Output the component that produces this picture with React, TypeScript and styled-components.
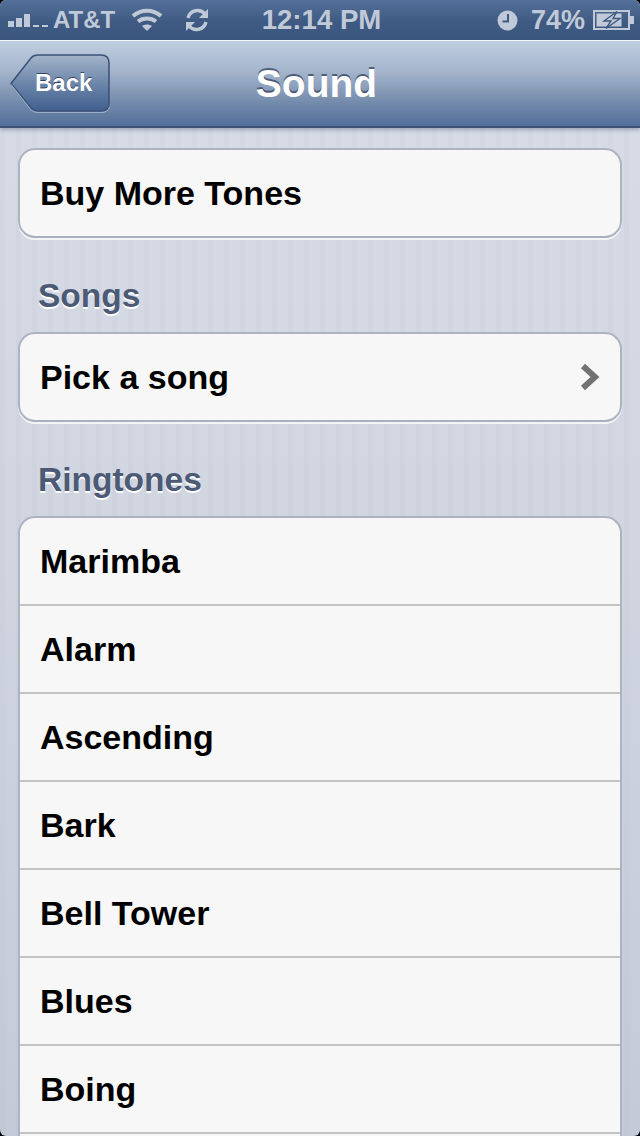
import { ReactNode } from "react";
import styled, { createGlobalStyle } from "styled-components";

const GlobalStyle = createGlobalStyle`
  html, body {
    margin: 0;
    padding: 0;
    background: #000;
  }
`;

const Screen = styled.div`
  width: 640px;
  height: 1136px;
  overflow: hidden;
  border-radius: 6px;
  display: flex;
  flex-direction: column;
  font-family: "Liberation Sans", Arial, sans-serif;
  background-color: #d3d8e3;
  background-image:
    linear-gradient(90deg, rgba(120, 130, 155, 0.035) 0 5px, transparent 5px 16px),
    linear-gradient(#d9dde7, #d0d5e0 50%, #c4cad7);
  background-size: 16px 100%, 100% 100%;
`;

const StatusBar = styled.div`
  height: 40px;
  flex: none;
  box-sizing: border-box;
  padding: 0 5px 0 8px;
  display: flex;
  align-items: center;
  justify-content: space-between;
  background: linear-gradient(#54709a, #3f5a82 55%, #3c577f);
  color: #c0c9d7;
  font-size: 28px;
  font-weight: bold;
  line-height: 40px;
`;

const StatusGroup = styled.div`
  width: 230px;
  display: flex;
  align-items: center;
`;

const StatusRight = styled(StatusGroup)`
  justify-content: flex-end;
`;

const Carrier = styled.span`
  margin-left: 1px;
  font-size: 24px;
`;

const Clock = styled.span`
  font-size: 27.6px;
`;

const Percent = styled.span`
  margin: 0 8px 0 13px;
  font-size: 27px;
`;

const WifiSlot = styled.svg`
  margin-left: 16px;
`;

const SyncSlot = styled.svg`
  margin-left: 22px;
`;

const NavBar = styled.div`
  height: 88px;
  flex: none;
  box-sizing: border-box;
  position: relative;
  display: flex;
  align-items: center;
  justify-content: center;
  padding-right: 7px;
  border-top: 1px solid #f2f5f9;
  border-bottom: 2px solid #3b5177;
  background: linear-gradient(#bfcedf, #a5b5cc 35%, #7088a9 75%, #536f99);
  box-shadow: 0 2px 4px rgba(50, 60, 80, 0.35);
`;

const Title = styled.h1`
  margin: 0;
  color: #fff;
  font-size: 39px;
  font-weight: bold;
  text-shadow: 0 -2px 0 rgba(50, 65, 95, 0.75);
`;

const BackButton = styled.button`
  position: absolute;
  left: 10px;
  top: 13px;
  width: 100px;
  height: 59px;
  padding: 0;
  border: 0;
  background: none;
`;

const BackShape = styled.svg`
  position: absolute;
  left: 0;
  top: 0;
`;

const BackLabel = styled.span`
  position: absolute;
  left: 25px;
  top: 15px;
  font-family: "Liberation Sans", Arial, sans-serif;
  color: #fff;
  font-size: 24px;
  font-weight: bold;
  line-height: 28px;
  text-shadow: 0 -1px 0 rgba(30, 45, 75, 0.8);
`;

const Content = styled.main`
  flex: 1;
  min-height: 0;
  padding: 20px 18px 0;
`;

const Group = styled.section`
  box-sizing: border-box;
  background: #f7f7f7;
  border: 2px solid #adb3bf;
  border-bottom-color: #a9afbb;
  border-radius: 17px;
  box-shadow: 0 2px 0 rgba(255, 255, 255, 0.75);
`;

const ListGroup = styled(Group)`
  margin-bottom: 40px;
`;

const Row = styled.div`
  height: 88px;
  box-sizing: border-box;
  padding: 0 20px;
  display: flex;
  align-items: center;
  justify-content: space-between;
  color: #000;
  font-size: 34px;
  font-weight: bold;
  border-top: 2px solid #c4c4c6;

  &:first-child {
    height: 86px;
    border-top: 0;
  }
`;

const SectionLabel = styled.h2`
  margin: 34px 0 0 20px;
  height: 60px;
  color: #4c5a75;
  font-size: 33.5px;
  font-weight: bold;
  line-height: 48px;
  text-shadow: 0 2px 0 #fff;
`;

const ringtones = ["Marimba", "Alarm", "Ascending", "Bark", "Bell Tower", "Blues", "Boing"];

const Chevron = () => (
  <svg width="20" height="28" viewBox="0 0 20 28">
    <path d="M3 3 L15 14 L3 25" fill="none" stroke="#727272" strokeWidth="6" />
  </svg>
);

const Signal = () => (
  <svg width="44" height="14" viewBox="0 0 44 14" fill="#c0c9d7">
    <rect x="0" y="8" width="6" height="6" />
    <rect x="8" y="5" width="6" height="9" />
    <rect x="16" y="1" width="6" height="13" />
    <rect x="25" y="12" width="6" height="2" />
    <rect x="34" y="12" width="6" height="2" />
  </svg>
);

const Wifi = () => (
  <WifiSlot width="32" height="24" viewBox="0 0 32 24" fill="none" stroke="#c0c9d7" strokeWidth="4">
    <path d="M2 8 C10 1 22 1 30 8" />
    <path d="M7 13.5 C12 9.5 20 9.5 25 13.5" />
    <path d="M16 23 L11 18 C14 16 18 16 21 18 Z" fill="#c0c9d7" stroke="none" />
  </WifiSlot>
);

const Sync = () => (
  <SyncSlot width="24" height="24" viewBox="0 0 24 24" fill="none" stroke="#c0c9d7" strokeWidth="3.4">
    <path d="M3 10 C5 2 15 0 20 6" />
    <path d="M21 14 C19 22 9 24 4 18" />
    <path d="M23 1 V10 H14 Z" fill="#c0c9d7" stroke="none" />
    <path d="M1 23 V14 H10 Z" fill="#c0c9d7" stroke="none" />
  </SyncSlot>
);

const Alarm = () => (
  <svg width="21" height="21" viewBox="0 0 21 21">
    <circle cx="10.5" cy="10.5" r="10" fill="#c0c9d7" />
    <path d="M11 4 V11.5 H5.5" fill="none" stroke="#3f5a82" strokeWidth="2" />
  </svg>
);

const Battery = () => (
  <svg width="42" height="20" viewBox="0 0 42 20">
    <rect x="1" y="1" width="35" height="18" fill="none" stroke="#c0c9d7" strokeWidth="2" />
    <rect x="3.5" y="3.5" width="25" height="13" fill="#c0c9d7" />
    <rect x="37" y="6" width="4" height="8" fill="#c0c9d7" />
    <path d="M24 1.5 L11 11 H18 L13 18.5 L27 8.5 H20 Z" fill="#c0c9d7" stroke="#3f5a82" strokeWidth="1.4" />
  </svg>
);

const BackBackground = () => (
  <BackShape width="100" height="59" viewBox="0 0 100 59">
    <defs>
      <linearGradient id="backFill" x1="0" y1="0" x2="0" y2="1">
        <stop offset="0" stopColor="#a3b4ca" />
        <stop offset="0.5" stopColor="#6d87aa" />
        <stop offset="1" stopColor="#3f5f8e" />
      </linearGradient>
    </defs>
    <path
      d="M1 29.5 L21 4 Q23.5 1 28 1 H91 Q99 1 99 9 V49 Q99 57 91 57 H28 Q23.5 57 21 54 Z"
      fill="url(#backFill)"
      stroke="#3d5479"
      strokeWidth="1.6"
    />
    <path d="M1 30.5 L21 56 Q24 58.6 28 58.6 H91 Q98 58.6 99.6 53" fill="none" stroke="#9fb1c8" strokeWidth="1" />
  </BackShape>
);

type SimpleRowProps = {
  children: ReactNode;
};

const SimpleGroup = ({ children }: SimpleRowProps) => (
  <Group>
    <Row>{children}</Row>
  </Group>
);

export default function App() {
  return (
    <Screen>
      <GlobalStyle />
      <StatusBar>
        <StatusGroup>
          <Signal />
          <Carrier>AT&amp;T</Carrier>
          <Wifi />
          <Sync />
        </StatusGroup>
        <Clock>12:14 PM</Clock>
        <StatusRight>
          <Alarm />
          <Percent>74%</Percent>
          <Battery />
        </StatusRight>
      </StatusBar>
      <NavBar>
        <BackButton>
          <BackBackground />
          <BackLabel>Back</BackLabel>
        </BackButton>
        <Title>Sound</Title>
      </NavBar>
      <Content>
        <SimpleGroup>Buy More Tones</SimpleGroup>
        <SectionLabel>Songs</SectionLabel>
        <SimpleGroup>
          Pick a song
          <Chevron />
        </SimpleGroup>
        <SectionLabel>Ringtones</SectionLabel>
        <ListGroup>
          {ringtones.map((name) => (
            <Row key={name}>{name}</Row>
          ))}
          <Row />
        </ListGroup>
      </Content>
    </Screen>
  );
}
